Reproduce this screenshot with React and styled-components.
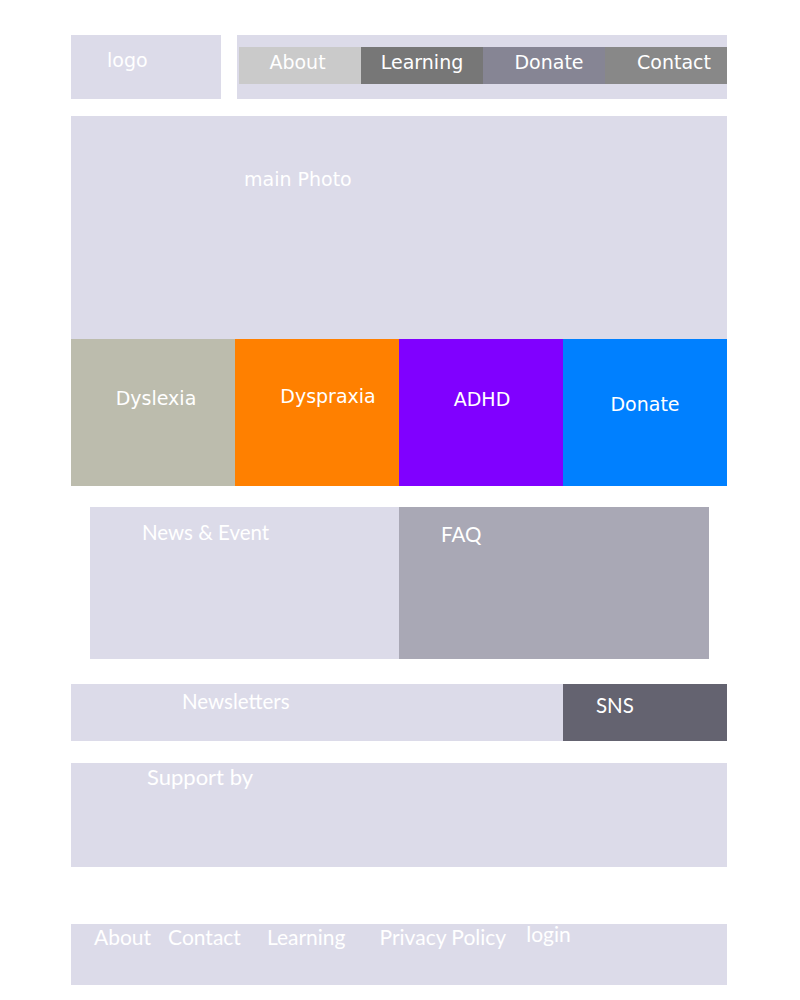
import React from 'react';
import styled, { createGlobalStyle } from 'styled-components';

const GlobalStyle = createGlobalStyle`
    body {
        margin: 0;
        background: #ffffff;
        font-family: "DejaVu Sans", sans-serif;
    }
`;

const lavender = '#dcdbe9';

const Page = styled.div`
    width: 656px;
    margin-left: 71px;
    padding-top: 35px;
    padding-bottom: 15px;
    display: flex;
    flex-direction: column;
`;

const Header = styled.header`
    display: grid;
    grid-template-columns: 150px 490px;
    column-gap: 16px;
    height: 64px;
`;

const Logo = styled.div`
    background: ${lavender};
    color: #ffffff;
    font-size: 19px;
    padding: 14px 0 0 36px;
`;

const NavBox = styled.nav`
    background: ${lavender};
    padding: 12px 0 0 2px;
    display: flex;
`;

const NavButton = styled.div`
    width: 122px;
    height: 37px;
    background: ${p => p.$bg};
    color: #ffffff;
    font-size: 19px;
    display: flex;
    align-items: center;
    justify-content: center;
    padding-left: ${p => p.$shift || 0}px;
    padding-right: ${p => p.$back || 0}px;
    padding-bottom: 7px;
    box-sizing: border-box;
`;

const Photo = styled.section`
    margin-top: 17px;
    height: 223px;
    background: ${lavender};
    color: #ffffff;
    font-size: 19px;
    padding: 52px 0 0 173px;
    box-sizing: border-box;
`;

const Categories = styled.div`
    display: grid;
    grid-template-columns: repeat(4, 164px);
    height: 147px;
`;

const Category = styled.div`
    background: ${p => p.$bg};
    color: #ffffff;
    font-size: 19px;
    text-align: center;
    padding-top: ${p => p.$top}px;
    padding-left: ${p => p.$shift || 0}px;
    box-sizing: border-box;
`;

const condensed = `"Lato", "Open Sans", sans-serif`;

const InfoRow = styled.div`
    margin: 21px 18px 0 19px;
    display: grid;
    grid-template-columns: 309px 310px;
    height: 152px;
`;

const Panel = styled.div`
    background: ${p => p.$bg};
    color: #ffffff;
    font-family: ${condensed};
    font-size: 20.5px;
    padding: ${p => p.$pad};
    box-sizing: border-box;
`;

const NewsRow = styled.div`
    margin-top: 25px;
    display: grid;
    grid-template-columns: 492px 164px;
    height: 57px;
`;

const Support = styled.div`
    margin-top: 22px;
    height: 104px;
    background: ${lavender};
    color: #ffffff;
    font-family: ${condensed};
    font-size: 22px;
    padding: 0 0 0 76px;
    box-sizing: border-box;
`;

const Footer = styled.footer`
    margin-top: 57px;
    height: 61px;
    background: ${lavender};
    display: flex;
    align-items: flex-start;
    padding: 0 0 0 23px;
    box-sizing: border-box;
`;

const FooterLink = styled.span`
    color: #ffffff;
    font-family: ${condensed};
    font-size: 21px;
    margin-left: ${p => p.$gap || 0}px;
    margin-top: ${p => p.$top}px;
`;

function App() {
    return (
        <>
            <GlobalStyle />
            <Page>
                <Header>
                    <Logo>logo</Logo>
                    <NavBox>
                        <NavButton $bg="#cacaca" $back={5}>About</NavButton>
                        <NavButton $bg="#777777">Learning</NavButton>
                        <NavButton $bg="#868594" $shift={10}>Donate</NavButton>
                        <NavButton $bg="#888888" $shift={16}>Contact</NavButton>
                    </NavBox>
                </Header>
                <Photo>main Photo</Photo>
                <Categories>
                    <Category $bg="#bcbcad" $top={48} $shift={6}>Dyslexia</Category>
                    <Category $bg="#ff8000" $top={46} $shift={22}>Dyspraxia</Category>
                    <Category $bg="#8000ff" $top={49} $shift={2}>ADHD</Category>
                    <Category $bg="#0080ff" $top={54}>Donate</Category>
                </Categories>
                <InfoRow>
                    <Panel $bg={lavender} $pad="13px 0 0 52px">News &amp; Event</Panel>
                    <Panel $bg="#a9a8b5" $pad="15px 0 0 42px">FAQ</Panel>
                </InfoRow>
                <NewsRow>
                    <Panel $bg={lavender} $pad="5px 0 0 111px">Newsletters</Panel>
                    <Panel $bg="#646370" $pad="9px 0 0 33px">SNS</Panel>
                </NewsRow>
                <Support>Support by</Support>
                <Footer>
                    <FooterLink $top={0}>About</FooterLink>
                    <FooterLink $gap={17} $top={0}>Contact</FooterLink>
                    <FooterLink $gap={26} $top={0}>Learning</FooterLink>
                    <FooterLink $gap={34} $top={0}>Privacy Policy</FooterLink>
                    <FooterLink $gap={20} $top={-3}>login</FooterLink>
                </Footer>
            </Page>
        </>
    );
}

export default App;
